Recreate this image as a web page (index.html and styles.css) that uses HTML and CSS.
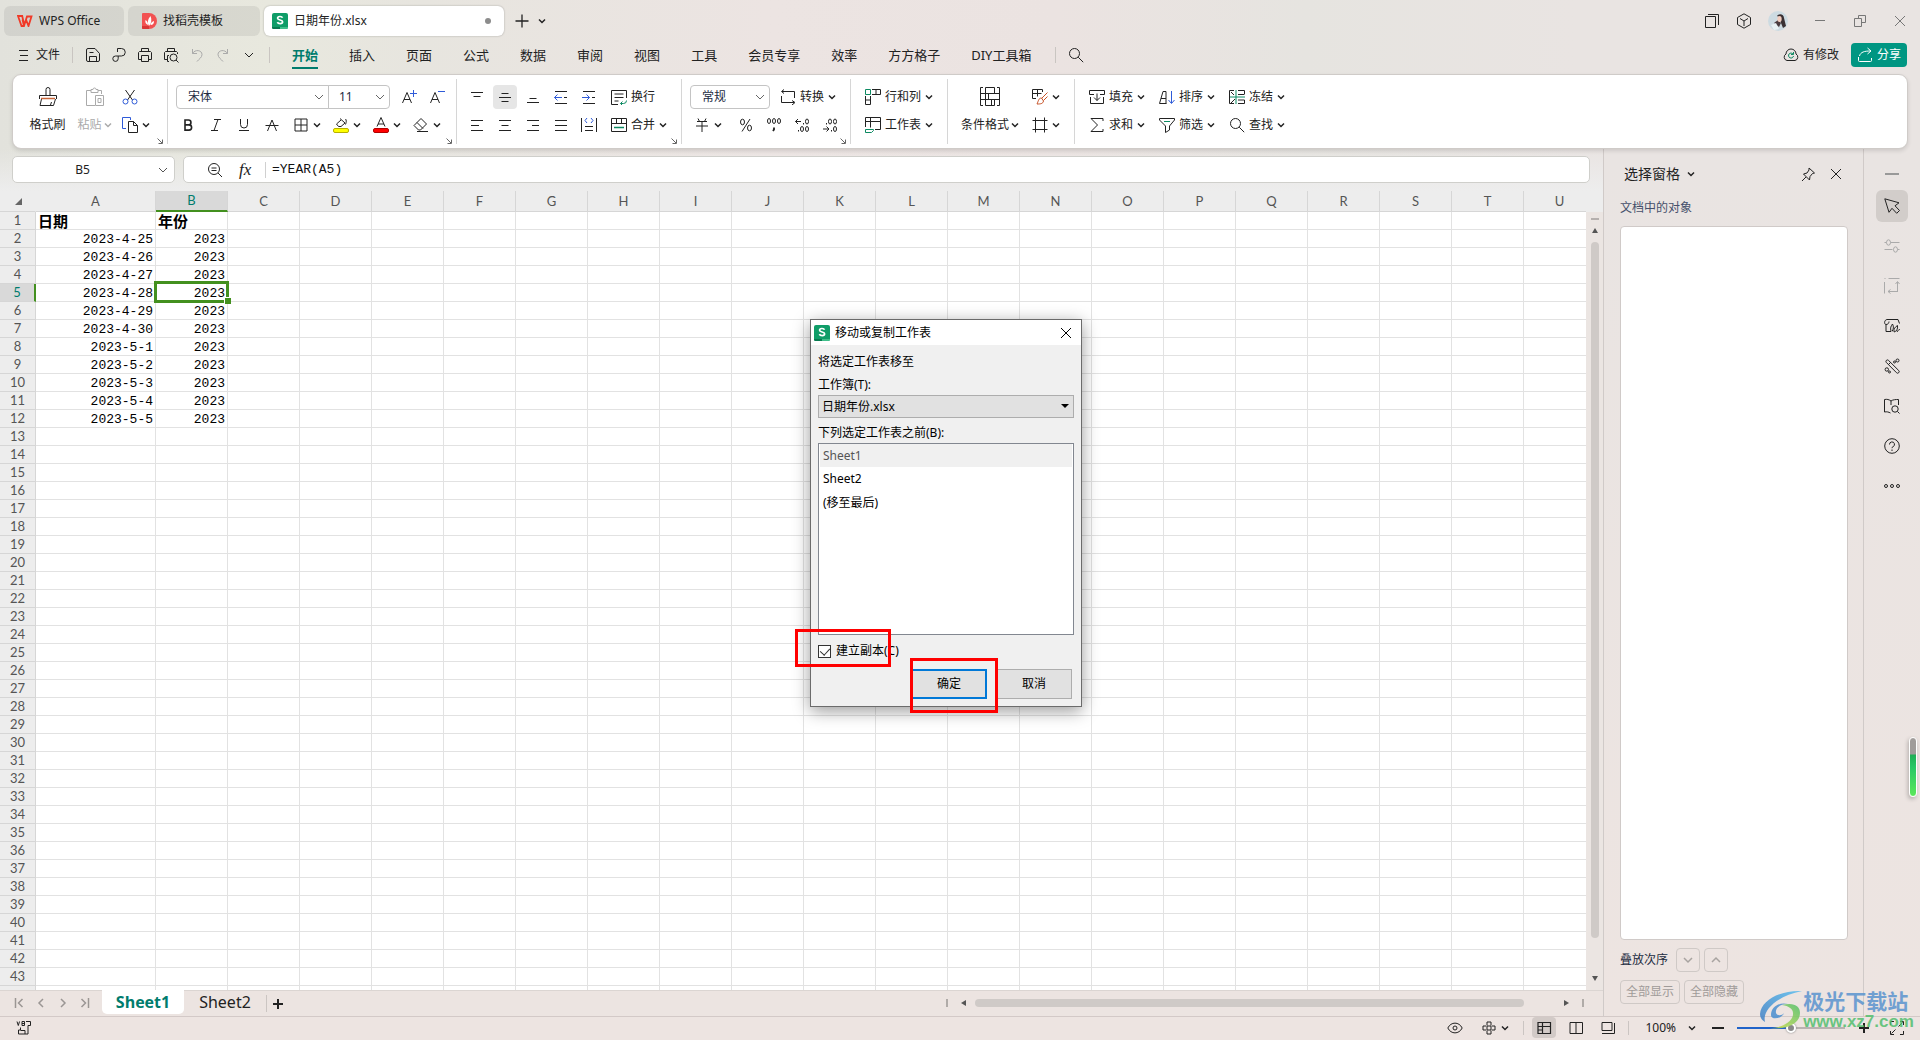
FILE: index.html
```html
<!DOCTYPE html>
<html lang="zh-CN">
<head>
<meta charset="utf-8">
<title>日期年份.xlsx - WPS Office</title>
<link rel="stylesheet" href="styles.css">
</head>
<body>
<svg class="sprite" aria-hidden="true">
  <symbol id="chev" viewBox="0 0 8 8"><path d="M1 2.500l3 3 3-3" stroke-width="1.500"/></symbol>
  <symbol id="wchev" viewBox="0 0 10 8"><path d="M1 2l4 4 4-4"/></symbol>
  <symbol id="menu" viewBox="0 0 16 16"><path d="M4 3.500h9M5 8.500h8M4 13.500h9"/></symbol>
  <symbol id="save" viewBox="0 0 16 16"><path d="M3 1.500h7l4.500 5v6.500a1.500 1.500 0 0 1-1.500 1.500H3A1.500 1.500 0 0 1 1.500 13V3A1.500 1.500 0 0 1 3 1.500zM4.500 14V9.500h7V14M4.500 5.500h4"/></symbol>
  <symbol id="export" viewBox="0 0 16 16"><path d="M6.500 5V1.500h4a3.500 3.500 0 0 1 0 7.500H4.500a2.700 2.700 0 1 0 2.700 2.700V9"/></symbol>
  <symbol id="print" viewBox="0 0 16 16"><path d="M4.500 4.500v-3h7v3M4 12.500H1.500v-7l1-1h11l1 1v7H12M4.500 8.500h7v6h-7z"/></symbol>
  <symbol id="preview" viewBox="0 0 16 16"><path d="M4.500 4.500v-3h7v3M4 12.500H1.500v-7l1-1h11l1 1V7M6 14.500H4.500v-6H6"/><circle cx="10.500" cy="10.500" r="3.500"/><path d="M13 13l2.500 2.500"/></symbol>
  <symbol id="undo" viewBox="0 0 16 16"><path d="M3.500 2v4.500H8M3.500 6.500C6 2 13 3 13 7.500c0 3-3 4.500-5 7"/></symbol>
  <symbol id="redo" viewBox="0 0 16 16"><path d="M12.500 2v4.500H8M12.500 6.500C10 2 3 3 3 7.500c0 3 3 4.500 5 7"/></symbol>
  <symbol id="search" viewBox="0 0 16 16"><circle cx="6.500" cy="6.500" r="5"/><path d="M10.200 10.200l5 5"/></symbol>
  <symbol id="zoomout" viewBox="0 0 16 16"><circle cx="7" cy="7" r="5.500"/><path d="M11 11l4 4M4.500 6h5M4.500 8.500h5"/></symbol>
  <symbol id="brush" viewBox="0 0 20 20"><path d="M8 8V2.500a2 2 0 0 1 4 0V8M1.500 12V8.500h17V12M3.500 12L2 18.500h13.500l2-6.500M12.500 18l1-3"/><path d="M3 11.500h14" stroke="#c8653a" stroke-width="1.500"/></symbol>
  <symbol id="paste" viewBox="0 0 20 20"><path d="M6 3.500H1.500v15H10M13 3.500h3.500V7M6 2.500h2a1.500 1.500 0 0 1 3 0h2v3H6zM10.500 8.500h8v10h-8zM13 11.500h3v4h-3z"/></symbol>
  <symbol id="cut" viewBox="0 0 16 16"><path d="M3.500 1l7 10M12.500 1l-7 10"/><circle cx="3.500" cy="12.500" r="2.500" stroke="#2f5bd8"/><circle cx="12.500" cy="12.500" r="2.500" stroke="#2f5bd8"/></symbol>
  <symbol id="copy" viewBox="0 0 16 16"><path d="M4 11.500H.5V.5h8V3" stroke="#2f5bd8"/><path d="M6.500 4.500h5l4 4v7h-9zM11.500 4.500v4h4"/></symbol>
  <symbol id="fontup" viewBox="0 0 16 16"><path d="M1.500 14L6 3.500 10.500 14M3 10.500h6"/><path d="M12.500 1v7M9 4.500h7" stroke="#2f5bd8"/></symbol>
  <symbol id="fontdown" viewBox="0 0 16 16"><path d="M1.500 14L6 3.500 10.500 14M3 10.500h6"/><path d="M9 2.500h7" stroke="#2f5bd8"/></symbol>
  <symbol id="bold" viewBox="0 0 16 16"><path d="M5 3h3.500a2.400 2.400 0 0 1 0 4.900H5zM5 7.900h4a2.600 2.600 0 0 1 0 5.200H5z" stroke-width="1.600"/></symbol>
  <symbol id="italic" viewBox="0 0 16 16"><path d="M6 2.500h7M3 13.500h7M10 2.500L6 13.500"/></symbol>
  <symbol id="under" viewBox="0 0 16 16"><path d="M4.500 2v5.500a3.500 3.500 0 0 0 7 0V2M3 13.500h10"/></symbol>
  <symbol id="strike" viewBox="0 0 16 16"><path d="M3.500 14L8 3l4.500 11M1.500 8.500h13"/></symbol>
  <symbol id="borders" viewBox="0 0 16 16"><path d="M2 2h12v12H2zM2 8h12M8 2v12"/></symbol>
  <symbol id="fill" viewBox="0 0 16 16"><path d="M7 1.500l5 4.500-4 3.500H5.500L3.500 7 8 3M12.500 2c1 1 1 3 0 5.500"/><rect x=".5" y="11.500" width="15" height="4" rx="1.500" fill="#ff0" stroke="#b8b000"/></symbol>
  <symbol id="fcolor" viewBox="0 0 16 16"><path d="M4 9.500L8 .5l4 9M5 7h6"/><rect x=".5" y="11.500" width="15" height="4" rx="1.500" fill="#f00" stroke="#b00000"/></symbol>
  <symbol id="eraser" viewBox="0 0 16 16"><path d="M1 8.500l7-7 5.500 5.500-6 6H5.500zM4 5.500l6 6M4 14.500h11"/></symbol>
  <symbol id="vtop" viewBox="0 0 16 16"><path d="M2 3.500h12M4.500 7.500h7"/></symbol>
  <symbol id="vmid" viewBox="0 0 16 16"><path d="M4.500 4.500h7M2 8.500h12M4.500 12.500h7"/></symbol>
  <symbol id="vbot" viewBox="0 0 16 16"><path d="M4.500 9.500h7M2 13.500h12"/></symbol>
  <symbol id="outdent" viewBox="0 0 16 16"><path d="M2 2.500h12M11 8.500h3M2 14.500h12"/><path d="M9 8.500H1.500M4.500 5.500l-3 3 3 3" stroke="#2f5bd8"/></symbol>
  <symbol id="indent" viewBox="0 0 16 16"><path d="M2 2.500h12M11 8.500h3M2 14.500h12"/><path d="M1 8.500h7.500M5.500 5.500l3 3-3 3" stroke="#2f5bd8"/></symbol>
  <symbol id="aleft" viewBox="0 0 16 16"><path d="M2 3.500h12M2 8.500h8M2 13.500h12"/></symbol>
  <symbol id="acenter" viewBox="0 0 16 16"><path d="M2 3.500h12M4.500 8.500h7M2 13.500h12"/></symbol>
  <symbol id="aright" viewBox="0 0 16 16"><path d="M2 3.500h12M7 8.500h7M2 13.500h12"/></symbol>
  <symbol id="ajust" viewBox="0 0 16 16"><path d="M2 3.500h12M2 8.500h12M2 13.500h12"/></symbol>
  <symbol id="adist" viewBox="0 0 16 16"><path d="M.5 1v14M15.500 1v14M4 9.500h8M4 13.500h8"/><path d="M6 1L4 3.500 6 6M10 1l2 2.500L10 6" stroke="#2f5bd8"/></symbol>
  <symbol id="wrap" viewBox="0 0 16 16"><path d="M7 15.500H.5V1.500h15V9M3.500 5h9M3.500 8.500h9M3.500 12h4"/><path d="M15.500 11.500a3 3 0 0 1-3 3H9.500M11.500 12.500l-2 2 2 2" stroke="#0d8a62"/></symbol>
  <symbol id="merge" viewBox="0 0 16 16"><path d="M.5 1.500h15v13H.5zM.5 6.500h15M5.500 1.500v5M10.500 1.500v5"/><path d="M3 10.500h10" stroke="#0d8a62" stroke-width="1.500"/></symbol>
  <symbol id="convert" viewBox="0 0 16 16"><path d="M4 .5l-2.500 2L4 4.500M2 2.500h12.500V9M12 11.500l3 2-3 2.500M14 13.500H1.500V7"/></symbol>
  <symbol id="yen" viewBox="0 0 16 16"><path d="M4 1.500l1.500 3M12 1.500l-1.500 3M3 4.500h10M2 9h12M8 4.500v10.500"/></symbol>
  <symbol id="percent" viewBox="0 0 16 16"><ellipse cx="4.500" cy="5" rx="2" ry="2.800"/><ellipse cx="11.500" cy="11" rx="2" ry="2.800"/><path d="M12 2L4 14.500"/></symbol>
  <symbol id="thou" viewBox="0 0 16 16"><ellipse cx="3" cy="4" rx="1.500" ry="2.500"/><ellipse cx="8" cy="4" rx="1.500" ry="2.500"/><ellipse cx="13" cy="4" rx="1.500" ry="2.500"/><path d="M8 10.500v2l-1 1.500" stroke-width="1.800"/></symbol>
  <symbol id="incdec" viewBox="0 0 16 16"><path d="M7 4.500H1.500M4 2L1.500 4.500 4 7M9.500 6v1.500M4.500 13v1.500"/><ellipse cx="13" cy="4.500" rx="1.500" ry="2.500"/><ellipse cx="8" cy="12" rx="1.500" ry="2.500"/><ellipse cx="13" cy="12" rx="1.500" ry="2.500"/></symbol>
  <symbol id="decdec" viewBox="0 0 16 16"><path d="M1 12H6.500M4.500 9.500L7 12 4.500 14.500M4.500 6v1.500M9.500 13v1.500"/><ellipse cx="8" cy="4.500" rx="1.500" ry="2.500"/><ellipse cx="13" cy="4.500" rx="1.500" ry="2.500"/><ellipse cx="13" cy="12" rx="1.500" ry="2.500"/></symbol>
  <symbol id="rowcol" viewBox="0 0 16 16"><path d="M.5.5h5v5h-5z" stroke="#0d8a62"/><path d="M7 .5h8.500v5H7M11 .5v5M.5 7v8.500h5V7M.5 11h5"/></symbol>
  <symbol id="wsheet" viewBox="0 0 16 16"><path d="M.5 10V.5h15v12H10M.5 4.500h15M5.500.5v10"/><path d="M.5 12.500h8v1l-2 2h-6z" stroke="#0d8a62"/></symbol>
  <symbol id="cond" viewBox="0 0 20 20"><path d="M3 .5H.5v18H3M17 .5h2.500v18H17M.5 6.500h19M.5 12.500h19M5.500.5h9v6M5.500.5v18h9v-6M8.500 6.500v6M11.500 12.500v6"/></symbol>
  <symbol id="tstyle" viewBox="0 0 16 16"><path d="M10.500 3V.5H.5v9H4M.5 4.500h9M5.500.5v7"/><path d="M15.500 3.500l-6 6M15.500 7.500l-4 4M9.500 9c-3 0-3 3-4.500 6 3 0 6 0 6.500-3z" stroke="#c8552a"/></symbol>
  <symbol id="cells" viewBox="0 0 16 16"><path d="M3.500.5v15M12.500.5v15M.5 3.500h15M.5 12.500h15"/></symbol>
  <symbol id="fillin" viewBox="0 0 16 16"><path d="M5 5.500H.5v-4h15v4H11M1.500 8v6.500h13V8M8 4.500v7M5 8.500l3 3 3-3"/></symbol>
  <symbol id="sort" viewBox="0 0 16 16"><path d="M.5 14.500l3.500-12h3v12M2 9.500h5M.5 14.500h7"/><path d="M12.500 2v12M9.500 11l3 3.500 3-3.500" stroke="#2f5bd8"/></symbol>
  <symbol id="freeze" viewBox="0 0 16 16"><path d="M5 1.500H.5v13H5M15.500 5V1.500H9M15.500 11v3.500H9M2 3l3 3M2 14l4-4M9 5.500h6.500M9 11h6.500"/><path d="M7 1v14M1 8h15" stroke="#0d8a62"/></symbol>
  <symbol id="sigma" viewBox="0 0 16 16"><path d="M14 4V1.500H2L8.500 8 2 14.500h12V12"/></symbol>
  <symbol id="filter" viewBox="0 0 16 16"><path d="M.5 1.500h15v1.500L10.500 9v4l-4 2.500V9L.500 3z"/><path d="M5 4.500h6" stroke="#0d8a62"/></symbol>
  <symbol id="launch" viewBox="0 0 6 6"><path d="M.5.5l4.500 4.500M5.500 1.500v4h-4"/></symbol>
  <symbol id="windows" viewBox="0 0 16 16"><path d="M1.500 3.500h10v11h-10zM4 1.500h10.500V12"/></symbol>
  <symbol id="cube" viewBox="0 0 16 16"><path d="M8 .8L14.500 4.500v7L8 15.200 1.500 11.500v-7zM4 5.500l4 2.500 4-2.500M8 8v5"/></symbol>
  <symbol id="min" viewBox="0 0 16 16"><path d="M3 7.500h10"/></symbol>
  <symbol id="restore" viewBox="0 0 16 16"><path d="M2.500 5.500h7v8h-7zM6.500 5V2.500h7v7H10"/></symbol>
  <symbol id="close" viewBox="0 0 16 16"><path d="M3 3l10 10M13 3L3 13"/></symbol>
  <symbol id="plus" viewBox="0 0 16 16"><path d="M8 1.500v13M1.500 8h13" stroke-width="1.300"/></symbol>
  <symbol id="cloud" viewBox="0 0 16 16"><path d="M4 13.500a3.500 3.500 0 0 1-1-6.500 5 5 0 0 1 10 0 3.500 3.500 0 0 1-1 6.500z"/><path d="M10 7a2.500 2.500 0 1 0 .5 2M10.500 5v2.500H8" stroke="#0d8a62"/></symbol>
  <symbol id="share" viewBox="0 0 16 16"><path d="M1.500 10v3.500a1 1 0 0 0 1 1h11a1 1 0 0 0 1-1V11M2.500 9c1-4 5-5 11-5M10.500 1l3.500 3-3.500 3"/></symbol>
  <symbol id="pin" viewBox="0 0 16 16"><path d="M9 2l5.500 5-2 .5-2.500 3-.5 3.500L3.500 8 7 7l2-3zM6 11l-4 4"/></symbol>
  <symbol id="cursor" viewBox="0 0 16 16"><path d="M.8.8l14.200 4-4 3 4.500 4.700-2.800 2.800-4.700-5-3 4z"/></symbol>
  <symbol id="sliders" viewBox="0 0 16 16"><path d="M.5 4.500h2M6.500 4.500h9M.5 11.500h8M13.500 11.500h2"/><ellipse cx="4.500" cy="4.500" rx="2" ry="2.700"/><ellipse cx="11.500" cy="11.500" rx="2" ry="2.700"/></symbol>
  <symbol id="align" viewBox="0 0 16 16"><path d="M4.500.5h11M.5 4v11.500M.5.500h1M13.500 14V4M11.500 6l2-2.500 2 2.500M13.500 13.500H4M6.500 11.500L4 13.500l2.500 2"/></symbol>
  <symbol id="tmpl" viewBox="0 0 16 16"><path d="M15.500 5.500l-1.500-4H3C0 2 0 6.500 2 6.500v7h5M2 6.500c3 0 3-3 3-3M7 13c-1-3 0-5 1.500-7 1.500 3 1 5-.5 7.500M10 13.500C9.500 11 11 9 13.500 7.500 14 11 12.500 13.500 10 14zM13 14c1-2 2-2.500 3-2.500"/></symbol>
  <symbol id="wand" viewBox="0 0 16 16"><path d="M2.200 4.300a1.500 1.500 0 0 1 2.200-2L14.700 12.500a1.500 1.500 0 0 1-2.200 2.200zM4.500 6.500l2.200-2.200"/><circle cx="13.500" cy="2.500" r="1.500"/><circle cx="10.500" cy="4" r="1"/><circle cx="2.800" cy="11.500" r="1.700"/><circle cx="5.500" cy="14" r="1"/></symbol>
  <symbol id="book" viewBox="0 0 16 16"><path d="M7 3C5 1.500 3 1 .5 1.500V14c2.500-.5 4 0 6 1M7 3c2-1.500 5-1.500 7.500-1.500V7M7 3v4"/><circle cx="11" cy="11" r="3.200"/><path d="M13.500 13.500l2 2"/></symbol>
  <symbol id="help" viewBox="0 0 16 16"><circle cx="8" cy="8" r="7.300"/><path d="M5.500 6.500a2.500 2.500 0 1 1 3.500 2.200c-.8.300-1 .8-1 1.500M8 11.500V13"/></symbol>
  <symbol id="more" viewBox="0 0 16 16"><circle cx="2" cy="8" r="1.500"/><circle cx="8" cy="8" r="1.500"/><circle cx="14" cy="8" r="1.500"/></symbol>
  <symbol id="eye" viewBox="0 0 16 16"><path d="M.8 8C4 1.500 12 1.500 15.200 8 12 14.500 4 14.500.8 8z"/><circle cx="8" cy="8" r="2"/></symbol>
  <symbol id="crossh" viewBox="0 0 16 16"><path d="M6 5.500V2h4v3.500M6 10.500V14h4v-3.500M5 6H2v4h3M11 6h3v4h-3M6 6h4v4H6z"/></symbol>
  <symbol id="vnormal" viewBox="0 0 16 16"><path d="M2 2.500h12.500v11H2zM2 6.500h12.500M6.500 2.500v11M2 10h4.500" stroke-width="1.200"/></symbol>
  <symbol id="vpage" viewBox="0 0 16 16"><path d="M2 2.500h12.500v11H2zM8 2.500v11"/></symbol>
  <symbol id="vbreak" viewBox="0 0 16 16"><path d="M2 10.500v-8h10v8zM14.500 3v10.500H2"/></symbol>
  <symbol id="full" viewBox="0 0 16 16"><path d="M1.500 5V1.500H5M11 1.500h3.500V5M14.500 11v3.500H11M5 14.500H1.500V11M9.500 6.500l4-4M6.500 9.500l-4 4"/></symbol>
  <symbol id="vb" viewBox="0 0 16 16"><path d="M1 1.500l1.300 4 1.200-4M6 1.500v4h2.500v-4zM6 3.500h2.500M10 1.500h4.500v4H12v8.500H2.500V10h2V7.500M4.500 10.500H9V14"/></symbol>
  <symbol id="first" viewBox="0 0 12 12"><path d="M2.500 1v10M9.500 2l-4 4 4 4" stroke-width="1.500"/></symbol>
  <symbol id="prev" viewBox="0 0 12 12"><path d="M8 2L4 6l4 4" stroke-width="1.500"/></symbol>
  <symbol id="next" viewBox="0 0 12 12"><path d="M4 2l4 4-4 4" stroke-width="1.500"/></symbol>
  <symbol id="last" viewBox="0 0 12 12"><path d="M9.500 1v10M2.500 2l4 4-4 4" stroke-width="1.500"/></symbol>
  <symbol id="slogo" viewBox="0 0 16 16"><rect width="16" height="16" rx="2" fill="#0f9d68"/><path d="M0 14h8v2H1.500A1.500 1.500 0 0 1 0 14.500z" fill="#087a50" stroke="none"/><path d="M8 14h8v.5a1.500 1.500 0 0 1-1.500 1.500H8z" fill="#3fbf8a" stroke="none"/><path d="M10.500 4.800C9.800 3 5.600 3 5.600 5.300c0 2.200 5 1.200 5 3.500 0 2.400-4.500 2.200-5.200.3" stroke="#fff" stroke-width="1.700"/></symbol>
</svg>

<header class="titlebar">
  <button class="doc doc-home"><svg class="logo" viewBox="0 0 16 12"><path d="M1 1h4.200l2 9L4.500 11zM5.500 4.500L7 11l3-9.500h4.500L11.500 11 9 4.500" fill="none" stroke="#f03a28" stroke-width="1.800"/></svg><span>WPS Office</span></button>
  <button class="doc doc-tpl"><svg class="ic" viewBox="0 0 16 16"><path d="M2 0h6a8 8 0 0 1 0 16H2a1 1 0 0 1-1-1V1a1 1 0 0 1 1-1z" fill="#f25252"/><path d="M1 13h7v3H2a1 1 0 0 1-1-1z" fill="#d93636"/><path d="M8 13C6 9 7 6 9.500 3c1.500 4 1 7-1.500 10zM7 12C4.500 11 4 9 4.500 7 6.500 8 7 10 7 12zM9.500 12c0-2 1-3 3.500-4 0 2.500-1 4-3.500 4z" fill="#fff"/></svg><span>找稻壳模板</span></button>
  <button class="doc doc-active"><svg class="ic"><use href="#slogo"/></svg><span>日期年份.xlsx</span><i class="dot"></i></button>
  <button class="tool"><svg class="ic"><use href="#plus"/></svg></button>
  <button class="tool tool-s"><svg class="cv"><use href="#chev"/></svg></button>
  <div class="wincontrols">
    <button class="tool"><svg class="ic"><use href="#windows"/></svg></button>
    <button class="tool"><svg class="ic"><use href="#cube"/></svg></button>
    <svg class="avatar" viewBox="0 0 20 20"><circle cx="10" cy="10" r="10" fill="#cddbe2"/><path d="M9 5c2-3 7-2 7 2l2 8-3 2-2-5-2-6z" fill="#3a3033"/><path d="M6 12l4-3 3 3-2 4z" fill="#4a3c40"/><ellipse cx="11.500" cy="8" rx="2.200" ry="3" fill="#f1cdbf"/><path d="M3 14l5-2 3 6-5 1z" fill="#e8f1f4"/></svg>
    <button class="tool faint"><svg class="ic"><use href="#min"/></svg></button>
    <button class="tool faint"><svg class="ic"><use href="#restore"/></svg></button>
    <button class="tool faint"><svg class="ic"><use href="#close"/></svg></button>
  </div>
</header>

<nav class="menubar">
  <button class="filebtn"><svg class="ic"><use href="#menu"/></svg>文件</button>
  <i class="sep"></i>
  <div class="quick">
    <button><svg class="ic"><use href="#save"/></svg></button>
    <button><svg class="ic"><use href="#export"/></svg></button>
    <button><svg class="ic"><use href="#print"/></svg></button>
    <button><svg class="ic"><use href="#preview"/></svg></button>
    <button class="off"><svg class="ic"><use href="#undo"/></svg></button>
    <button class="off"><svg class="ic"><use href="#redo"/></svg></button>
    <button><svg class="wcv"><use href="#wchev"/></svg></button>
  </div>
  <i class="sep"></i>
  <div class="tabs">
    <a href="#" class="on">开始</a><a href="#">插入</a><a href="#">页面</a><a href="#">公式</a><a href="#">数据</a><a href="#">审阅</a><a href="#">视图</a><a href="#">工具</a><a href="#">会员专享</a><a href="#">效率</a><a href="#">方方格子</a><a href="#">DIY工具箱</a>
  </div>
  <i class="sep"></i>
  <button class="find"><svg class="ic"><use href="#search"/></svg></button>
  <div class="menuright">
    <button class="changes"><svg class="ic"><use href="#cloud"/></svg>有修改</button>
    <button class="share"><svg class="ic"><use href="#share"/></svg>分享</button>
  </div>
</nav>

<section class="ribbon">
  <div class="group g1">
    <button class="big"><svg class="ic20"><use href="#brush"/></svg><span>格式刷</span></button>
    <button class="big off"><svg class="ic20"><use href="#paste"/></svg><span>粘贴<svg class="cv"><use href="#chev"/></svg></span></button>
    <div class="rows">
      <div class="row"><button class="split"><svg class="ic"><use href="#cut"/></svg></button></div>
      <div class="row"><button class="split"><svg class="ic"><use href="#copy"/></svg><svg class="cv"><use href="#chev"/></svg></button></div>
    </div>
    <svg class="launch"><use href="#launch"/></svg>
  </div>
  <div class="group g2">
    <div class="rows">
      <div class="row fonts">
        <span class="combo c-font"><select aria-label="字体"><option>宋体</option></select><svg class="wcv"><use href="#wchev"/></svg></span>
        <span class="combo c-size"><select aria-label="字号"><option>11</option></select><svg class="wcv"><use href="#wchev"/></svg></span>
        <button class="ib"><svg class="ic"><use href="#fontup"/></svg></button>
        <button class="ib"><svg class="ic"><use href="#fontdown"/></svg></button>
      </div>
      <div class="row">
        <button class="ib"><svg class="ic"><use href="#bold"/></svg></button>
        <button class="ib"><svg class="ic"><use href="#italic"/></svg></button>
        <button class="ib"><svg class="ic"><use href="#under"/></svg></button>
        <button class="ib"><svg class="ic"><use href="#strike"/></svg></button>
        <button class="split"><svg class="ic"><use href="#borders"/></svg><svg class="cv"><use href="#chev"/></svg></button>
        <button class="split"><svg class="ic"><use href="#fill"/></svg><svg class="cv"><use href="#chev"/></svg></button>
        <button class="split"><svg class="ic"><use href="#fcolor"/></svg><svg class="cv"><use href="#chev"/></svg></button>
        <button class="split"><svg class="ic"><use href="#eraser"/></svg><svg class="cv"><use href="#chev"/></svg></button>
      </div>
    </div>
    <svg class="launch"><use href="#launch"/></svg>
  </div>
  <div class="group g3">
    <div class="rows">
      <div class="row">
        <button class="ib"><svg class="ic"><use href="#vtop"/></svg></button>
        <button class="ib pressed"><svg class="ic"><use href="#vmid"/></svg></button>
        <button class="ib"><svg class="ic"><use href="#vbot"/></svg></button>
        <button class="ib"><svg class="ic"><use href="#outdent"/></svg></button>
        <button class="ib"><svg class="ic"><use href="#indent"/></svg></button>
        <button class="lb"><svg class="ic"><use href="#wrap"/></svg>换行</button>
      </div>
      <div class="row">
        <button class="ib"><svg class="ic"><use href="#aleft"/></svg></button>
        <button class="ib"><svg class="ic"><use href="#acenter"/></svg></button>
        <button class="ib"><svg class="ic"><use href="#aright"/></svg></button>
        <button class="ib"><svg class="ic"><use href="#ajust"/></svg></button>
        <button class="ib"><svg class="ic"><use href="#adist"/></svg></button>
        <button class="lb"><svg class="ic"><use href="#merge"/></svg>合并<svg class="cv"><use href="#chev"/></svg></button>
      </div>
    </div>
    <svg class="launch"><use href="#launch"/></svg>
  </div>
  <div class="group g4">
    <div class="rows">
      <div class="row">
        <span class="combo c-fmt"><select aria-label="数字格式"><option>常规</option></select><svg class="wcv"><use href="#wchev"/></svg></span>
        <button class="lb"><svg class="ic"><use href="#convert"/></svg>转换<svg class="cv"><use href="#chev"/></svg></button>
      </div>
      <div class="row">
        <button class="split"><svg class="ic"><use href="#yen"/></svg><svg class="cv"><use href="#chev"/></svg></button>
        <button class="ib"><svg class="ic"><use href="#percent"/></svg></button>
        <button class="ib"><svg class="ic"><use href="#thou"/></svg></button>
        <button class="ib"><svg class="ic"><use href="#incdec"/></svg></button>
        <button class="ib"><svg class="ic"><use href="#decdec"/></svg></button>
      </div>
    </div>
    <svg class="launch"><use href="#launch"/></svg>
  </div>
  <div class="group g5">
    <div class="rows">
      <div class="row"><button class="lb"><svg class="ic"><use href="#rowcol"/></svg>行和列<svg class="cv"><use href="#chev"/></svg></button></div>
      <div class="row"><button class="lb"><svg class="ic"><use href="#wsheet"/></svg>工作表<svg class="cv"><use href="#chev"/></svg></button></div>
    </div>
  </div>
  <div class="group g6">
    <button class="big wide"><svg class="ic20"><use href="#cond"/></svg><span>条件格式<svg class="cv"><use href="#chev"/></svg></span></button>
    <div class="rows">
      <div class="row"><button class="lb"><svg class="ic"><use href="#tstyle"/></svg><svg class="cv"><use href="#chev"/></svg></button></div>
      <div class="row"><button class="lb"><svg class="ic"><use href="#cells"/></svg><svg class="cv"><use href="#chev"/></svg></button></div>
    </div>
  </div>
  <div class="group g7">
    <div class="rows">
      <div class="row">
        <button class="lb"><svg class="ic"><use href="#fillin"/></svg>填充<svg class="cv"><use href="#chev"/></svg></button>
        <button class="lb"><svg class="ic"><use href="#sort"/></svg>排序<svg class="cv"><use href="#chev"/></svg></button>
        <button class="lb"><svg class="ic"><use href="#freeze"/></svg>冻结<svg class="cv"><use href="#chev"/></svg></button>
      </div>
      <div class="row">
        <button class="lb"><svg class="ic"><use href="#sigma"/></svg>求和<svg class="cv"><use href="#chev"/></svg></button>
        <button class="lb"><svg class="ic"><use href="#filter"/></svg>筛选<svg class="cv"><use href="#chev"/></svg></button>
        <button class="lb"><svg class="ic"><use href="#search"/></svg>查找<svg class="cv"><use href="#chev"/></svg></button>
      </div>
    </div>
  </div>
</section>

<main class="work">
  <section class="book">
    <div class="formulabar">
      <span class="namebox"><input type="text" value="B5" aria-label="名称框"><svg class="wcv"><use href="#wchev"/></svg></span>
      <span class="fxbox"><svg class="ic"><use href="#zoomout"/></svg><span class="fx">fx</span><input type="text" value="=YEAR(A5)" aria-label="编辑栏"></span>
    </div>
    <div class="gridwrap">
      <div class="gridview"><table class="grid" id="grid"></table></div>
      <div class="vscroll"><i class="grip"></i><i class="up"></i><i class="thumb"></i><i class="down"></i></div>
    </div>
    <div class="sheetbar">
      <div class="sheetnav">
        <button><svg class="ic12"><use href="#first"/></svg></button><button><svg class="ic12"><use href="#prev"/></svg></button><button><svg class="ic12"><use href="#next"/></svg></button><button><svg class="ic12"><use href="#last"/></svg></button>
      </div>
      <button class="sheet on">Sheet1</button>
      <button class="sheet">Sheet2</button>
      <button class="addsheet"><svg class="ic12" viewBox="0 0 12 12"><path d="M6 1v10M1 6h10" stroke-width="2"/></svg></button>
      <div class="hscroll"><i class="bar"></i><i class="left"></i><span class="track"><i class="thumb"></i></span><i class="right"></i><i class="bar"></i></div>
    </div>
  </section>

  <aside class="pane">
    <div class="panehead"><button class="panetitle">选择窗格<svg class="cv"><use href="#chev"/></svg></button><button><svg class="ic"><use href="#pin"/></svg></button><button><svg class="ic"><use href="#close"/></svg></button></div>
    <div class="panelabel">文档中的对象</div>
    <div class="objects"></div>
    <div class="order"><span>叠放次序</span><button><svg class="cv12" viewBox="0 0 12 12"><path d="M2 4l4 4 4-4" stroke-width="1.500"/></svg></button><button><svg class="cv12" viewBox="0 0 12 12"><path d="M2 8l4-4 4 4" stroke-width="1.500"/></svg></button></div>
    <div class="showhide"><button disabled>全部显示</button><button disabled>全部隐藏</button></div>
  </aside>

  <aside class="rail">
    <i class="railgrip"></i>
    <button class="on"><svg class="ic"><use href="#cursor"/></svg></button>
    <button class="off"><svg class="ic"><use href="#sliders"/></svg></button>
    <button class="off"><svg class="ic"><use href="#align"/></svg></button>
    <button><svg class="ic"><use href="#tmpl"/></svg></button>
    <button><svg class="ic"><use href="#wand"/></svg></button>
    <button><svg class="ic"><use href="#book"/></svg></button>
    <button><svg class="ic"><use href="#help"/></svg></button>
    <button><svg class="ic"><use href="#more"/></svg></button>
  </aside>
</main>

<footer class="status">
  <button class="vb"><svg class="ic"><use href="#vb"/></svg></button>
  <div class="statusright">
    <button class="st"><svg class="ic"><use href="#eye"/></svg></button>
    <button class="st st-cross"><svg class="ic"><use href="#crossh"/></svg><svg class="cv"><use href="#chev"/></svg></button>
    <i class="ssep"></i>
    <button class="st view on"><svg class="ic"><use href="#vnormal"/></svg></button>
    <button class="st view"><svg class="ic"><use href="#vpage"/></svg></button>
    <button class="st view"><svg class="ic"><use href="#vbreak"/></svg></button>
    <i class="ssep"></i>
    <button class="st zoom">100%<svg class="cv"><use href="#chev"/></svg></button>
    <button class="st pm"><svg class="ic12" viewBox="0 0 12 12"><path d="M0 6h12" stroke-width="2"/></svg></button>
    <input type="range" min="0" max="100" value="50" aria-label="缩放">
    <button class="st pm"><svg class="ic12" viewBox="0 0 12 12"><path d="M6 1v10M1 6h10" stroke-width="2"/></svg></button>
    <button class="st fullbtn"><svg class="ic"><use href="#full"/></svg></button>
  </div>
</footer>

<div class="dialog" role="dialog" aria-label="移动或复制工作表">
  <div class="dlghead"><svg class="ic"><use href="#slogo"/></svg><span>移动或复制工作表</span><button><svg class="ic"><use href="#close"/></svg></button></div>
  <div class="dlgbody">
    <p>将选定工作表移至</p>
    <label for="wb">工作簿(T):</label>
    <span class="dd"><select id="wb"><option>日期年份.xlsx</option></select></span>
    <label for="before" class="l2">下列选定工作表之前(B):</label>
    <select id="before" size="8"><option class="cur">Sheet1</option><option>Sheet2</option><option>(移至最后)</option></select>
    <label class="copy"><input type="checkbox" checked><span>建立副本(C)</span></label>
    <div class="btns"><button class="ok">确定</button><button>取消</button></div>
  </div>
  <i class="mark mark-copy"></i>
  <i class="mark mark-ok"></i>
</div>

<i class="gauge"></i>

<div class="watermark">
  <svg viewBox="0 0 44 40"><defs><linearGradient id="wa" x1="0" y1="1" x2="1" y2="0"><stop offset="0" stop-color="#3f7fc4"/><stop offset="1" stop-color="#58bdf0"/></linearGradient><linearGradient id="wb2" x1="0" y1="1" x2="1" y2="0"><stop offset="0" stop-color="#d6e04a"/><stop offset="1" stop-color="#4fbf6a"/></linearGradient></defs><path d="M43 1C22 0 2 10 1 24c0 4 2 6 5 8C3 20 18 6 43 1z" fill="url(#wa)"/><path d="M12 25c0-9 9-13 17-11-8 0-13 4-12 9 1 3 6 3 8 0-1 5-13 8-13 2z" fill="#4a8fd0"/><path d="M23 15c12-3 18 1 18 8 0 10-12 17-30 15 12 0 24-7 23-15 0-4-4-7-11-8z" fill="url(#wb2)"/></svg>
  <div><b>极光下载站</b><span>www.xz7.com</span></div>
</div>
<script src="grid.js"></script>
</body>
</html>
```

FILE: styles.css
```css
* { box-sizing: border-box; }
html, body { height: 100%; }
body {
  margin: 0;
  display: flex;
  flex-direction: column;
  position: relative;
  overflow: hidden;
  font: 12px/16px "Noto Sans", "Noto Sans CJK SC", sans-serif;
  color: #222;
  background: linear-gradient(90deg, #e2e2dc 0%, #e8e8de 14%, #e7e5df 22%, #ece4e2 40%, #ebe3e1 55%, #e6e4e0 68%, #e9e4e2 82%, #e9e4e2 100%);
}
button, input, select { font: inherit; color: inherit; margin: 0; }
button { border: 0; padding: 0; background: none; display: flex; align-items: center; justify-content: center; white-space: nowrap; }
svg { fill: none; stroke: currentColor; flex: none; display: block; }
i { display: block; flex: none; }
.sprite { position: absolute; width: 0; height: 0; }
.ic { width: 16px; height: 16px; }
.ic12, .cv12 { width: 12px; height: 12px; }
.ic20 { width: 20px; height: 20px; }
.cv { width: 8px; height: 8px; }
.wcv { width: 10px; height: 8px; }
.off { color: #aaa; }

/* title bar */
.titlebar { display: flex; align-items: center; height: 41px; padding: 0 4px 0 4px; flex: none; }
.doc { height: 30px; border-radius: 6px; background: rgba(0, 0, 0, .065); justify-content: flex-start; margin-right: 4px; }
.doc svg { stroke: none; }
.doc .logo { width: 16px; height: 12px; margin-right: 6px; }
.doc .ic { margin-right: 6px; }
.doc-home { width: 120px; padding-left: 13px; }
.doc-tpl { width: 132px; padding-left: 13px; }
.doc-active { width: 240px; padding: 0 13px 0 8px; background: #fff; box-shadow: 0 0 2px rgba(0, 0, 0, .3); }
.dot { width: 6px; height: 6px; border-radius: 50%; background: #8c8c8c; margin-left: auto; }
.tool { width: 28px; height: 28px; }
.tool-s { width: 12px; }
.wincontrols { margin-left: auto; display: flex; align-items: center; }
.wincontrols .tool { width: 32px; }
.wincontrols .faint { width: 40px; color: #777; }
.wincontrols .faint:last-child { width: 32px; margin-left: 4px; }
.avatar { width: 20px; height: 20px; margin: 0 12px 0 8px; stroke: none; }

/* menu bar */
.menubar { display: flex; align-items: center; height: 28px; padding: 0 13px 0 15px; flex: none; }
.filebtn { gap: 5px; }
.sep { width: 1px; height: 16px; background: #c9c5c1; }
.filebtn + .sep { margin: 0 7px 0 12px; }
.quick { display: flex; }
.quick button { width: 26px; height: 24px; }
.quick + .sep { margin: 0 22px 0 7px; }
.tabs { display: flex; gap: 31px; font-size: 13px; }
.tabs a { color: #222; text-decoration: none; line-height: 26px; height: 27px; white-space: nowrap; }
.tabs .on { color: #007c6d; font-weight: bold; border-bottom: 2px solid #007c6d; }
.tabs + .sep { margin: 0 12px 0 24px; }
.menuright { margin-left: auto; display: flex; align-items: center; gap: 12px; }
.changes { gap: 4px; }
.share { width: 56px; height: 24px; gap: 4px; border-radius: 4px; background: #009682; color: #fff; }

/* ribbon */
.ribbon { display: flex; height: 75px; margin: 5px 12px 0; padding: 4px 0; background: #fff; border: 1px solid #cfcbc8; border-radius: 9px; box-shadow: 0 2px 4px rgba(0, 0, 0, .12); flex: none; position: relative; z-index: 1; }
.group { display: flex; position: relative; padding-top: 6px; border-right: 1px solid #d6d6d6; }
.group:last-child { border-right: 0; }
.rows { display: flex; flex-direction: column; gap: 4px; }
.row { display: flex; align-items: center; height: 24px; }
.launch { position: absolute; right: 4px; bottom: 0; width: 6px; height: 6px; color: #666; }
.ib { width: 28px; height: 24px; border-radius: 4px; }
.pressed { width: 24px; margin: 0 2px; background: #e6e6e6; }
.split { width: 40px; padding-left: 4px; gap: 4px; justify-content: flex-start; }
.lb { gap: 4px; }
.big { width: 47px; height: 52px; flex-direction: column; justify-content: space-between; padding: 2px 0 4px; }
.big span { display: flex; align-items: center; gap: 2px; }
.g1 { padding-left: 11px; width: 155px; }
.g2 { padding-left: 6px; padding-right: 6px; width: 289px; }
.g2 .split:nth-child(5) { margin-left: 3px; }
.combo { display: flex; align-items: center; height: 24px; position: relative; border: 1px solid #c4c4c4; border-radius: 4px; }
.combo select { appearance: none; width: 100%; height: 22px; border: 0; background: none; padding: 0 0 0 11px; color: #222b3f; outline: 0; }
.combo .wcv { position: absolute; right: 4px; color: #666; }
.fonts { padding-left: 2px; }
.c-font { width: 153px; border-radius: 4px 0 0 4px; }
.c-size { width: 62px; margin: 0 5px 0 -1px; border-radius: 0 4px 4px 0; }
.c-size select { padding-left: 10px; }
.g3 { padding-left: 6px; width: 225px; }
.g3 .lb { margin-left: 8px; }
.g4 { padding-left: 8px; width: 169px; }
.c-fmt { width: 80px; }
.g4 .lb { margin-left: 10px; }
.g4 .split { width: 42px; }
.g5 { padding-left: 14px; width: 97px; }
.g6 { padding-left: 12px; width: 127px; }
.g6 .wide { width: 60px; margin-right: 12px; }
.g7 { padding-left: 14px; }
.g7 .lb { width: 70px; justify-content: flex-start; }

/* work area */
.work { display: flex; flex: 1; min-height: 0; background: linear-gradient(180deg, transparent, #ede4e1); }
.book { display: flex; flex-direction: column; flex: 1; min-width: 0; }
.formulabar { display: flex; gap: 8px; padding: 7px 13px 8px 12px; height: 42px; flex: none; background: linear-gradient(180deg, transparent, #ededed); }
.namebox, .fxbox { height: 27px; background: #fff; border: 1px solid #cfcfcb; border-radius: 5px; display: flex; align-items: center; }
.namebox { width: 163px; padding-right: 6px; color: #555; }
.namebox input { flex: 1; min-width: 0; border: 0; background: none; padding: 0 6px 0 0; text-align: center; color: #222; }
.fxbox { flex: 1; padding-left: 23px; }
.fxbox input { flex: 1; border: 0; border-left: 1px solid #d0d0d0; padding: 0 6px; height: 16px; font: 13px/16px "Liberation Mono", monospace; color: #111; background: none; }
.fx { width: 34px; padding-left: 16px; margin-right: 8px; font: italic 17px/20px "Liberation Serif", serif; }
.gridwrap { flex: 1; display: flex; min-height: 0; background: #fff; }
.gridview { flex: 1; min-width: 0; overflow: hidden; }
.grid { border-collapse: separate; border-spacing: 0; table-layout: fixed; width: 1596px; }
.grid th, .grid td { padding: 0; height: 18px; border-right: 1px solid #e2e2e2; border-bottom: 1px solid #e2e2e2; white-space: nowrap; }
.grid th { background: #ededed; color: #555; font: 13px/17px Lato, sans-serif; border-color: #d6d6d6; }
.grid thead th { height: 21px; }
.grid .corner { border-right-color: #ededed; }
.corner i { width: 0; height: 0; border: solid transparent; border-width: 0 0 7px 7px; border-bottom-color: #666; margin-left: 15px; }
.grid thead .sel { background: #d9d9d9; color: #007c6d; border-bottom: 2px solid #43901f; }
.grid tbody .sel { background: #d9d9d9; color: #007c6d; border-right: 2px solid #43901f; }
.c-head { width: 36px; }
.c-a { width: 120px; }
.c-n { width: 72px; }
.grid td { color: #000; text-align: right; padding: 2px 2px 0 0; font: 13px/15px "Liberation Mono", monospace; }
.grid td.title { text-align: left; padding: 0 0 0 2px; font: bold 15px/17px "Noto Sans CJK SC", sans-serif; }
.grid .active { position: relative; }
.active i { position: absolute; inset: -3px -2px -2px; border: 3px solid #43901f; }
.active i::after { content: ""; position: absolute; right: -5px; bottom: -4px; width: 6px; height: 6px; background: #43901f; border: solid #fff; border-width: 1px 0 0 1px; }
.vscroll { width: 17px; flex: none; display: flex; flex-direction: column; align-items: center; background: #ebe5e2; margin-top: 21px; box-shadow: 0 -21px #ededed; padding-bottom: 9px; }
.vscroll .grip { width: 8px; height: 2px; margin: 6px 0 8px; background: #b5b0ae; }
.up { border: 3px solid transparent; border-top: 0; border-bottom: 5px solid #555; }
.down { border: 3px solid transparent; border-bottom: 0; border-top: 5px solid #555; }
.vscroll .thumb { width: 8px; flex: 1; margin: 9px 0 38px; border-radius: 4px; background: #cfcac7; }
.sheetbar { display: flex; height: 27px; flex: none; background: #ece4e1; border-top: 1px solid #dbd5d2; border-bottom: 1px solid #d3c9c7; padding-left: 8px; }
.sheetnav { display: flex; color: #9b9694; width: 94px; }
.sheetnav button { width: 22px; height: 24px; }
.sheet { width: 82px; height: 24px; margin-top: -1px; font-size: 16px; line-height: 22px; padding-bottom: 1px; }
.sheet.on { font: bold 16px/22px "Open Sans", sans-serif; color: #007c6d; background: #fff; border-radius: 0 0 5px 5px; }
.addsheet { width: 22px; height: 17px; margin-top: 4px; border-left: 1px solid #cbc5c2; }
.hscroll { margin-left: auto; width: 638px; height: 24px; margin-right: 19px; display: flex; align-items: center; }
.bar { width: 2px; height: 8px; background: #b0aba8; }
.left { border: 3px solid transparent; border-left: 0; border-right: 5px solid #555; margin: 0 9px 0 13px; }
.right { border: 3px solid transparent; border-right: 0; border-left: 5px solid #555; margin-right: 13px; }
.track { flex: 1; padding-right: 40px; }
.hscroll .thumb { height: 8px; border-radius: 4px; background: #cfcac7; }

/* selection pane */
.pane { width: 261px; flex: none; display: flex; flex-direction: column; border-left: 1px solid #d0cac8; border-right: 1px solid #d0cac8; border-bottom: 1px solid #d3c9c7; padding: 13px 15px 12px 16px; }
.panehead { display: flex; align-items: center; height: 24px; gap: 12px; padding: 0 4px; }
.panetitle { font-size: 14px; gap: 7px; margin-right: auto; }
.panelabel { margin: 14px 0 10px; color: #46506b; }
.objects { flex: 1; background: #fff; border: 1px solid #d0cac8; border-radius: 4px; }
.order, .showhide { display: flex; align-items: center; gap: 4px; height: 24px; margin-top: 8px; color: #222b3f; }
.order span { margin-right: 4px; }
.order button { width: 24px; height: 24px; border: 1px solid #cfc9c6; border-radius: 4px; color: #a8a3a0; }
.showhide button { width: 60px; height: 24px; border: 1px solid #cfc9c6; border-radius: 4px; color: #a09b99; }

/* right tool rail */
.rail { width: 56px; flex: none; display: flex; flex-direction: column; align-items: center; gap: 8px; border-bottom: 1px solid #d3c9c7; }
.railgrip { width: 14px; height: 2px; margin: 24px 0 7px; background: #999; }
.rail button { width: 32px; height: 32px; border-radius: 6px; }
.rail .on { background: #d2cdca; }

/* status bar */
.status { display: flex; align-items: center; height: 23px; flex: none; padding: 0 15px 2px 16px; background: #ede4e1; }
.statusright { margin-left: auto; display: flex; align-items: center; height: 21px; }
.st { height: 21px; }
.st-cross { gap: 4px; margin: 0 14px 0 18px; }
.ssep { width: 1px; height: 14px; background: #cbc5c2; }
.view { width: 24px; margin: 0 0 0 8px; border-radius: 4px; }
.view.on { background: #d2cac7; }
.view + .ssep { margin: 0 16px 0 8px; }
.zoom { gap: 12px; margin-right: 16px; }
.pm { width: 12px; }
.status input { appearance: none; width: 116px; height: 12px; margin: 0 9px; background: linear-gradient(90deg, #2163c9 50%, #b8b2b0 50%) center / 108px 2px no-repeat; }
.status input::-webkit-slider-thumb { appearance: none; width: 10px; height: 10px; border: 2px solid #fff; border-radius: 50%; background: #888; box-shadow: 0 0 2px #777; }
.fullbtn { margin-left: 19px; }

/* move / copy dialog */
.dialog { position: absolute; left: 810px; top: 319px; z-index: 5; width: 272px; background: #f0f0f0; border: 1px solid #6b6b6b; color: #000; box-shadow: 0 4px 16px rgba(0, 0, 0, .4); }
.dlghead { display: flex; align-items: center; height: 25px; padding: 0 7px 0 3px; background: #fff; }
.dlghead span { margin: 0 auto 0 5px; }
.dlghead > .ic { stroke: none; }
.dlgbody { display: flex; flex-direction: column; padding: 9px 7px 7px; }
.dlgbody p { margin: 0 0 7px; }
.dlgbody label { margin-bottom: 2px; }
.dlgbody .l2 { margin: 7px 0 2px; }
.dd { position: relative; display: flex; }
.dd select { appearance: none; width: 100%; height: 23px; padding: 0 3px; border: 1px solid #adadad; border-radius: 0; background: #e1e1e1; }
.dd::after { content: ""; position: absolute; right: 5px; top: 9px; border: 4px solid transparent; border-bottom: 0; border-top-color: #000; }
#before { height: 192px; padding: 0 1px; border: 1px solid #828790; border-radius: 0; background: #fff; overflow: hidden; outline: 0; }
#before option { height: 23px; min-height: 23px; padding: 3px; line-height: 17px; }
#before .cur { background: #f0f0f0; color: #555; }
.dlgbody .copy { display: flex; align-items: center; gap: 5px; height: 16px; margin: 8px 0 10px; }
.copy input { appearance: none; width: 13px; height: 13px; border: 1px solid #333; background: #fff; position: relative; }
.copy input::after { content: ""; position: absolute; left: 3px; top: 0; width: 5px; height: 8px; border: solid #333; border-width: 0 1px 1px 0; transform: rotate(42deg); }
.btns { display: flex; justify-content: flex-end; gap: 9px; padding-right: 2px; }
.btns button { width: 76px; height: 30px; border: 1px solid #adadad; background: #e1e1e1; }
.btns .ok { border: 2px solid #0078d7; }
.mark { position: absolute; border: 3px solid #f00; pointer-events: none; }
.mark-copy { left: -16px; top: 309px; width: 96px; height: 38px; }
.mark-ok { left: 99px; top: 338px; width: 88px; height: 55px; }

/* floating level gauge and site badge */
.gauge { position: absolute; right: 3px; top: 737px; width: 8px; height: 60px; border: 1px solid #fff; border-radius: 4px; background: linear-gradient(180deg, #a09c9a 16px, #1fae55 17px, #27c766 50%, #5be85a); box-shadow: -1px 2px 4px rgba(0, 0, 0, .25); }
.watermark { position: absolute; right: 6px; bottom: 9px; display: flex; opacity: .85; pointer-events: none; }
.watermark svg { width: 44px; height: 40px; stroke: none; margin-top: 3px; }
.watermark div { display: flex; flex-direction: column; }
.watermark b { font: bold 21px/26px "Noto Sans CJK SC", sans-serif; color: #5a93cf; }
.watermark span { font: bold 17px/18px "Liberation Sans", sans-serif; color: #53bf70; }
```

FILE: grid.js
```js
const letters = "ABCDEFGHIJKLMNOPQRSTU".split("");
const dates = ["2023-4-25", "2023-4-26", "2023-4-27", "2023-4-28", "2023-4-29", "2023-4-30",
  "2023-5-1", "2023-5-2", "2023-5-3", "2023-5-4", "2023-5-5"];
const active = { row: 5, col: "B" };
const lastNumbered = 43;

let html = '<colgroup><col class="c-head"><col class="c-a">' + '<col class="c-n">'.repeat(20) + "</colgroup>";
html += '<thead><tr><th class="corner"><i></i></th>';
for (const l of letters) html += `<th${l === active.col ? ' class="sel"' : ""}>${l}</th>`;
html += "</tr></thead><tbody>";
for (let r = 1; r <= lastNumbered + 1; r++) {
  html += `<tr><th${r === active.row ? ' class="sel"' : ""}>${r <= lastNumbered ? r : ""}</th>`;
  for (const l of letters) {
    let text = "", cls = "";
    if (r === 1 && l === "A") { text = "日期"; cls = "title"; }
    if (r === 1 && l === "B") { text = "年份"; cls = "title"; }
    if (r > 1 && r <= dates.length + 1) {
      if (l === "A") text = dates[r - 2];
      if (l === "B") text = "2023";
    }
    if (r === active.row && l === active.col) { cls = "active"; text += "<i></i>"; }
    html += `<td${cls ? ` class="${cls}"` : ""}>${text}</td>`;
  }
  html += "</tr>";
}
document.getElementById("grid").innerHTML = html + "</tbody>";
```
